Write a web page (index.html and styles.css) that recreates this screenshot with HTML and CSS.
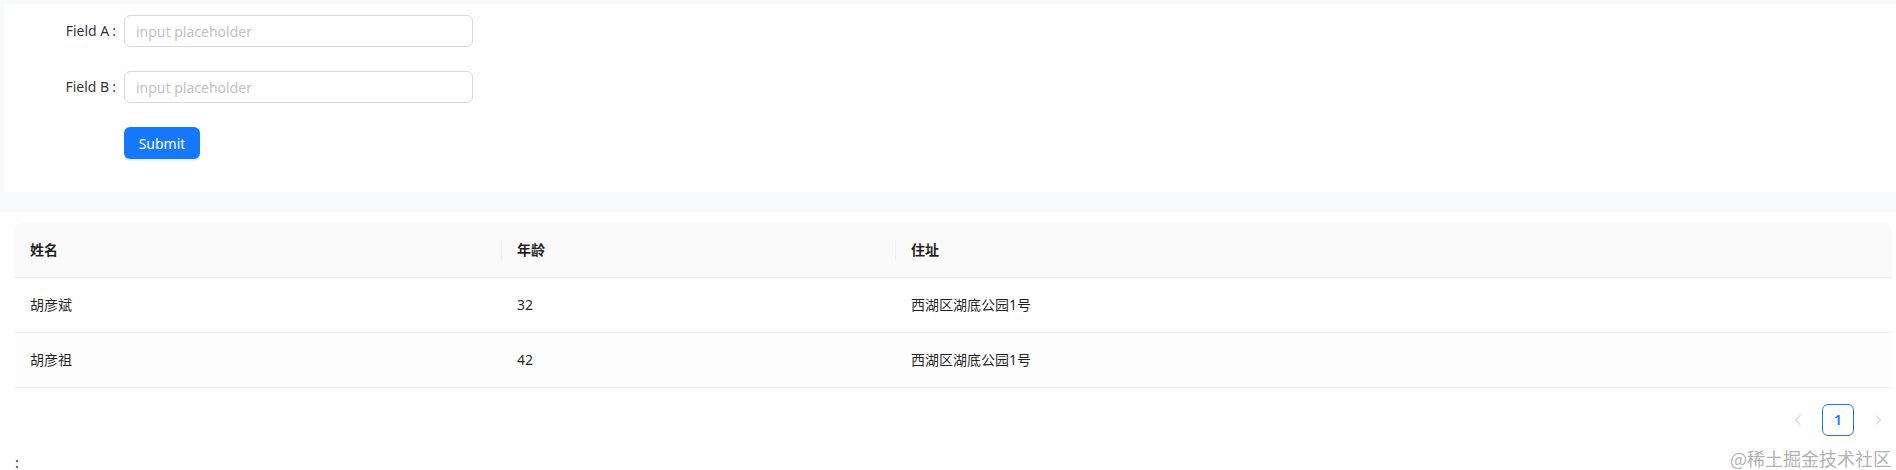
FILE: index.html
```html
<!DOCTYPE html>
<html lang="zh-CN">
<head>
<meta charset="utf-8">
<title>Form and Table</title>
<link rel="stylesheet" href="styles.css">
</head>
<body>
<div class="page">
  <section class="form-card">
    <div class="form-row">
      <label class="form-label">Field A<span class="colon">:</span></label>
      <input class="form-input" type="text" placeholder="input placeholder">
    </div>
    <div class="form-row">
      <label class="form-label">Field B<span class="colon">:</span></label>
      <input class="form-input" type="text" placeholder="input placeholder">
    </div>
    <div class="form-row">
      <span class="form-label"></span>
      <button class="btn-primary" type="button">Submit</button>
    </div>
  </section>

  <section class="table-section">
    <table class="data-table">
      <colgroup>
        <col class="col-name">
        <col class="col-age">
        <col class="col-addr">
      </colgroup>
      <thead>
        <tr>
          <th>姓名</th>
          <th class="sep">年龄</th>
          <th class="sep">住址</th>
        </tr>
      </thead>
      <tbody>
        <tr>
          <td>胡彦斌</td>
          <td>32</td>
          <td>西湖区湖底公园1号</td>
        </tr>
        <tr class="alt">
          <td>胡彦祖</td>
          <td>42</td>
          <td>西湖区湖底公园1号</td>
        </tr>
      </tbody>
    </table>

    <div class="pagination">
      <span class="page-arrow">
        <svg width="12" height="12" viewBox="0 0 12 12"><path d="M8 1.5 L3.5 6 L8 10.5" fill="none" stroke="currentColor" stroke-width="1"/></svg>
      </span>
      <span class="page-item active">1</span>
      <span class="page-arrow">
        <svg width="12" height="12" viewBox="0 0 12 12"><path d="M4 1.5 L8.5 6 L4 10.5" fill="none" stroke="currentColor" stroke-width="1"/></svg>
      </span>
    </div>
    <div class="stray">:</div>
  </section>

  <div class="watermark">@稀土掘金技术社区</div>
</div>
</body>
</html>
```

FILE: styles.css
```css
html, body {
  margin: 0;
  padding: 0;
}

body {
  background: #f8fafb;
  font-family: "Noto Sans", "Noto Sans CJK SC", sans-serif;
  font-size: 14px;
  line-height: 22px;
  color: rgba(0, 0, 0, 0.88);
  height: 470px;
  overflow: hidden;
}

.page {
  position: relative;
  height: 470px;
}

.form-card {
  margin: 4px 0 0 4px;
  height: 188px;
  box-sizing: border-box;
  background: #fff;
  padding-top: 11px;
}

.form-row {
  display: flex;
  align-items: center;
  height: 32px;
  margin-bottom: 24px;
}

.form-label {
  width: 120px;
  flex: none;
  box-sizing: border-box;
  padding-right: 8px;
  text-align: right;
  font-size: 14px;
  color: rgba(0, 0, 0, 0.82);
}

.colon {
  margin-left: 3px;
}

.form-input {
  width: 349px;
  height: 32px;
  box-sizing: border-box;
  border: 1px solid #d9d9d9;
  border-radius: 6px;
  padding: 4px 11px;
  font-family: inherit;
  font-size: 14px;
  color: rgba(0, 0, 0, 0.88);
  outline: none;
  background: #fff;
}

.form-input::placeholder {
  color: #c2c2c2;
}

.btn-primary {
  width: 76px;
  height: 32px;
  border: none;
  border-radius: 6px;
  background: #1677ff;
  color: #fff;
  font-family: inherit;
  font-size: 14px;
  padding: 0;
  box-shadow: 0 2px 0 rgba(5, 145, 255, 0.1);
}

.table-section {
  margin-top: 20px;
  background: #fff;
  height: 258px;
  box-sizing: border-box;
  padding: 11px 4px 0 14px;
}

.data-table {
  width: 100%;
  border-collapse: separate;
  border-spacing: 0;
  table-layout: fixed;
}

.col-name { width: 487px; }
.col-age { width: 394px; }

.data-table th,
.data-table td {
  text-align: left;
  padding: 16px;
  line-height: 22px;
  border-bottom: 1px solid #f0f0f0;
}

.data-table th {
  background: #fafafa;
  font-weight: 600;
  position: relative;
}

.data-table th:first-child {
  border-top-left-radius: 8px;
}

.data-table th:last-child {
  border-top-right-radius: 8px;
}

.data-table th.sep::before {
  content: "";
  position: absolute;
  left: 0;
  top: 50%;
  width: 1px;
  height: 22px;
  transform: translateY(-50%);
  background: #f0f0f0;
}

.data-table tr.alt td {
  background: #fdfdfd;
}

.pagination {
  display: flex;
  justify-content: flex-end;
  align-items: center;
  gap: 8px;
  margin-top: 16px;
  margin-right: -2px;
}

.page-arrow,
.page-item {
  width: 32px;
  height: 32px;
  box-sizing: border-box;
  display: flex;
  align-items: center;
  justify-content: center;
  border-radius: 6px;
}

.page-arrow {
  color: rgba(0, 0, 0, 0.25);
}

.page-item.active {
  border: 1px solid #1677ff;
  color: #1677ff;
  font-weight: 600;
  font-size: 14px;
}

.stray {
  margin-top: 16px;
  padding-left: 1px;
  font-size: 14px;
  line-height: 22px;
  color: rgba(0, 0, 0, 0.88);
}

.watermark {
  position: absolute;
  right: 5px;
  bottom: 5px;
  font-size: 18px;
  line-height: 22px;
  color: #b3b3b3;
  font-family: "Noto Sans CJK SC", sans-serif;
  text-shadow: 0 0 2px #fff;
}
```
